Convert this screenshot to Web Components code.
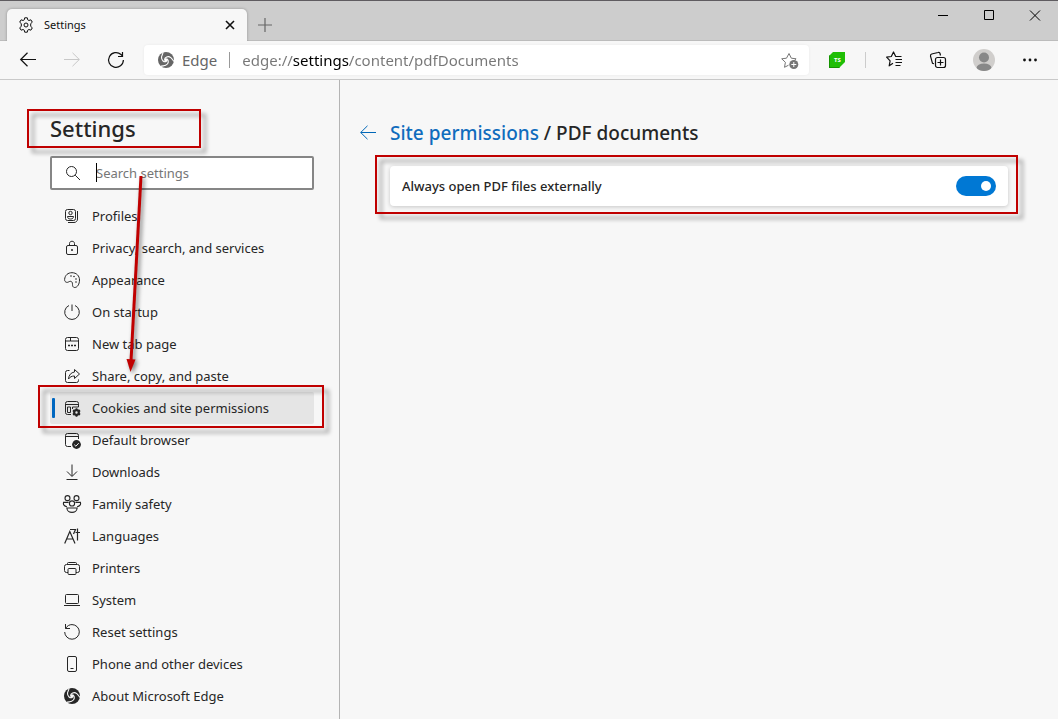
<!DOCTYPE html>
<html lang="en">
<head>
<meta charset="utf-8">
<title>Settings</title>
<style>
  html { height: 100%; }
  body {
    margin: 0;
    min-height: 100%;
    display: flex;
    background: #f7f7f7;
    color: #262626;
    font: 13px/20px "Noto Sans", "Open Sans", sans-serif;
  }
</style>
</head>
<body>
<edge-window></edge-window>

<script>
const ICONS = {
  gear: '<circle cx="8" cy="8" r="2"/><path d="M6.7 .8h2.6l.4 2 1.2.7 2-.7 1.4 2.4-1.6 1.4v2.8l1.6 1.4-1.4 2.4-2-.7-1.2.7-.4 2H6.7l-.4-2-1.2-.7-2 .7-1.4-2.4 1.6-1.4V6.6L1.700 5.2l1.400-2.400 2 .7 1.200-.7z" stroke-linejoin="round"/>',
  close: '<path d="M4 4l8 8M12 4l-8 8" stroke-width="1.600"/>',
  plus: '<path d="M8 1v14M1 8h14" stroke-width="1.200"/>',
  minimize: '<path d="M3 7.500h10"/>',
  maximize: '<path d="M3.500 2.500h9v9h-9z"/>',
  exit: '<path d="M3 2.500l10 10M13 2.500l-10 10"/>',
  back: '<path d="M16 7.500H.7M7.500 .8L.7 7.500l6.800 6.700" stroke-width="1.200"/>',
  backThin: '<path d="M16 7.500H.7M7.500 .8L.7 7.500l6.800 6.700"/>',
  forward: '<path d="M0 7.500h15.300M8.500 .8l6.800 6.700-6.800 6.700"/>',
  reload: '<path d="M15.400 8A7.400 7.400 0 1 1 13 2.500l1.500 1.500M14.500 0v4.500H10" stroke-width="1.200"/>',
  edge: '<mask id="m"><rect width="16" height="16" fill="#fff" stroke="none"/><circle cx="8" cy="8" r="1.800" fill="#000" stroke="none"/><g id="arms" stroke="#000" stroke-width="1.100"><path id="arm" d="M6.600 7.800C6.600 5.200 10 3.600 12.800 5.600 14.300 6.700 14.800 8.600 16.500 9.600"/><path d="M6.600 7.800C6.600 5.200 10 3.600 12.800 5.600 14.300 6.700 14.800 8.600 16.500 9.600" transform="rotate(120 8 8)"/><path d="M6.600 7.800C6.600 5.200 10 3.600 12.800 5.600 14.300 6.700 14.800 8.600 16.500 9.600" transform="rotate(240 8 8)"/></g></mask><circle cx="8" cy="8" r="8" fill="currentColor" stroke="none" mask="url(#m)"/>',
  starAdd: '<path d="M7.500 13.200l-4 2.100.9-5-3.700-3.500 4.800-.6L8 1.500l2.300 4.700 4.800.6-1.800 1.700" stroke-linejoin="round"/><circle cx="12.800" cy="12.500" r="4.500" fill="currentColor" stroke="none"/><path d="M12.800 10v5M10.300 12.500h5" stroke="#fff"/>',
  favorites: '<path d="M7 12.300l-3.800 2.500.9-5L.6 6.200l4.700-.7L7.500 1l2.200 4.500h5.800M9.500 8.500H16M9.500 11.500H16M9.500 14.500h5" stroke-width="1.200" stroke-linejoin="round" transform="translate(0 -1)"/>',
  collections: '<rect x="5.500" y="5.500" width="10" height="10" rx="2" stroke-width="1.200"/><path d="M10.500 7.500v6M7.500 10.500h6M4 11.800l-1.500-.5-2-7.200C.3 3 .8 2.300 1.700 2L8 .5c1-.3 1.800.2 2 1l.5 2" stroke-width="1.200"/>',
  more: '<g fill="currentColor" stroke="none"><circle cx="2.500" cy="8" r="1.400"/><circle cx="8" cy="8" r="1.400"/><circle cx="13.500" cy="8" r="1.400"/></g>',
  search: '<circle cx="6.500" cy="6.500" r="5"/><path d="M10.200 10.200L15 15"/>',
  profiles: '<rect x="1.500" y="1.500" width="10" height="11" rx="2"/><circle cx="6.500" cy="5" r="1.700"/><path d="M3.500 8.500h6c0 1.500-1 2.500-3 2.500s-3-1-3-2.500zM13.500 3v8c0 2-1.500 3.500-3.500 3.500H4"/>',
  lock: '<rect x="2.500" y="5.500" width="11" height="9" rx="1.500"/><path d="M5.500 5.500V3.500c0-3 5-3 5 0v2"/><circle cx="8" cy="10" r="1" fill="currentColor" stroke="none"/>',
  palette: '<path d="M.6 7.500C1 3 4 .7 8 .7c4.500 0 7.500 3.200 7.500 7.300 0 4-2 7.500-4.800 7.500-1.700 0-2.200-1.500-2.200-3 0-2-.7-3.200-2-3.200-1.700 0-2.500 1.500-4 1C1.200 9.900 .5 9 .6 7.500z"/><g fill="currentColor" stroke="none"><circle cx="7" cy="4" r=".8"/><circle cx="10" cy="4.500" r=".8"/><circle cx="12" cy="7" r=".8"/><circle cx="12" cy="10" r=".8"/></g>',
  power: '<path d="M5 1.500A7.300 7.300 0 1 0 11 1.500M8 .5V7"/>',
  newTab: '<rect x="1.500" y="1.500" width="13" height="13" rx="2"/><path d="M1.500 5h5V1.500M6.500 5h8"/><path d="M4 9.500h2M7 9.500h2M10 9.500h2" stroke-width="1.500"/>',
  share: '<path d="M5.500 2.500H3.500a2 2 0 0 0-2 2v8a2 2 0 0 0 2 2h9a2 2 0 0 0 2-2v-1"/><path d="M10.500 1.500l5 4.500-5 4.500V8C7.500 8 6 9 4.500 11c.3-4 2.500-6.500 6-7z" stroke-linejoin="round"/>',
  cookies: '<path d="M7 14.500H3.500a2 2 0 0 1-2-2v-9a2 2 0 0 1 2-2h9a2 2 0 0 1 2 2V7M1.500 4.500h13M8.500 7h6M3.500 7h3v5.500h-3zM8.500 7v2"/><circle cx="12.500" cy="12.500" r="2.300" stroke-width="2.200"/><path d="M12.500 8.300v2M12.500 14.800v2M8.900 10.400l1.700 1M14.400 13.600l1.700 1M16.100 10.400l-1.700 1M10.600 13.600l-1.700 1" stroke-width="1.800"/>',
  browser: '<path d="M7 14.500H3.500a2 2 0 0 1-2-2v-9a2 2 0 0 1 2-2h9a2 2 0 0 1 2 2V7M1.500 4.500h13"/><circle cx="12.500" cy="12.500" r="4.400" fill="currentColor" stroke="none"/><path d="M10.300 12.700l1.600 1.500 2.800-3" stroke="#f7f7f7"/>',
  download: '<path d="M8 .5v11.500M3 7.500l5 5 5-5M2.500 15.500h11"/>',
  family: '<g transform="translate(-1 -1) scale(1.125)"><circle cx="4" cy="2.800" r="2.200"/><circle cx="12" cy="2.800" r="2.200"/><circle cx="8" cy="7.500" r="2.300"/><path d="M5 6.500H.5c-.5 2 .5 3.500 3 4M11 6.500h4.500c.5 2-.5 3.500-3 4M3.500 11.500h9c0 5.300-9 5.300-9 0z"/></g>',
  languages: '<path d="M.7 15.500L5.800 3.500l5.200 12M2.500 11h6.800M6 1.500h5.500L9.500 6M13.500 .5v12M11.500 4.500h4.500" stroke-width="1.200"/>',
  printer: '<path d="M4 12.500H2.500a2 2 0 0 1-2-2V6.500a2 2 0 0 1 2-2h11a2 2 0 0 1 2 2v4a2 2 0 0 1-2 2H12M3.500 4.500v-1a1 1 0 0 1 1-1h7a1 1 0 0 1 1 1v1"/><rect x="4" y="8.500" width="8" height="6" rx="1"/>',
  laptop: '<rect x="1.500" y="2.500" width="13" height="9" rx="1"/><path d="M0 13.500h16"/>',
  reset: '<path d="M1.500 0v4.500H6M1.500 4.500C3.500 1.500 5.500 .6 8 .6A7.300 7.300 0 1 1 .7 8"/>',
  phone: '<rect x="3.500" y=".5" width="9" height="15" rx="1.500"/><path d="M6.500 12.500h3"/>'
};

function define(name, html, setup) {
  const template = document.createElement('template');
  template.innerHTML = html;
  customElements.define(name, class extends HTMLElement {
    constructor() {
      super();
      this.attachShadow({ mode: 'open' }).append(template.content.cloneNode(true));
    }
    connectedCallback() { if (setup) setup(this, this.shadowRoot); }
  });
}

define('ui-icon', `
  <style>
    :host { display: block; flex: none; width: 16px; height: 16px; }
    svg { display: block; width: 100%; height: 100%; overflow: visible; }
  </style>
  <svg viewBox="0 0 16 16" fill="none" stroke="currentColor" aria-hidden="true"></svg>
`, (host, root) => { root.querySelector('svg').innerHTML = ICONS[host.getAttribute('name')] || ''; });

define('icon-button', `
  <style>
    :host { display: flex; flex: none; width: 40px; height: 30px; }
    button {
      flex: 1; display: flex; align-items: center; justify-content: center;
      border: 0; padding: 0; background: none; color: inherit; font: inherit;
    }
  </style>
  <button type="button"><slot></slot></button>
`, (host, root) => {
  root.querySelector('button').setAttribute('aria-label', host.getAttribute('label'));
  root.querySelector('button').disabled = host.hasAttribute('disabled');
});

define('callout-frame', `
  <style>
    :host { display: block; position: relative; }
    .frame {
      position: absolute; z-index: 2; pointer-events: none;
      inset: var(--frame-inset, -10px);
      border: 2px solid #c00000;
      filter: drop-shadow(5px 5px 2px rgba(0, 0, 0, .4));
    }
  </style>
  <slot></slot><div class="frame"></div>
`);

define('callout-arrow', `
  <style>
    :host { display: block; position: absolute; z-index: 3; pointer-events: none; }
    svg { display: block; overflow: visible; filter: drop-shadow(2px 2px 2px rgba(0, 0, 0, .5)); }
  </style>
  <svg width="20" height="198" viewBox="0 0 20 198" aria-hidden="true">
    <path d="M16 1L6 186" stroke="#c00000" stroke-width="3" fill="none"/>
    <path d="M1.500 184l9 .5L5.500 197z" fill="#c00000"/>
  </svg>
`);

define('tab-strip', `
  <style>
    :host {
      display: flex; box-sizing: border-box; height: 41px; padding-left: 7px;
      background: #cdcdcd; border-top: 1px solid #5f5c60; border-bottom: 1px solid #bcbcbc;
    }
    .tab {
      display: flex; align-items: center; gap: 10px; box-sizing: border-box;
      width: 240px; height: 32px; margin-top: 8px; padding: 0 5px 0 11px;
      background: #f7f7f7; border-radius: 5px 5px 0 0; box-shadow: 0 0 3px rgba(0, 0, 0, .3);
      clip-path: inset(-4px -4px 0 -4px);
      color: #101010; font-size: 11px;
    }
    .tab span { flex: 1; }
    .tab icon-button { width: 24px; height: 24px; }
    .new { width: 36px; margin-top: 9px; color: #666; }
    .controls { display: flex; margin-left: auto; color: #000; }
    .controls icon-button { width: 46px; }
  </style>
  <div class="tab" role="tab" aria-selected="true">
    <ui-icon name="gear"></ui-icon><span>Settings</span>
    <icon-button label="Close tab"><ui-icon name="close"></ui-icon></icon-button>
  </div>
  <icon-button class="new" label="New tab"><ui-icon name="plus"></ui-icon></icon-button>
  <div class="controls">
    <icon-button label="Minimize"><ui-icon name="minimize"></ui-icon></icon-button>
    <icon-button label="Maximize"><ui-icon name="maximize"></ui-icon></icon-button>
    <icon-button label="Close"><ui-icon name="exit"></ui-icon></icon-button>
  </div>
`);

define('address-bar', `
  <style>
    :host {
      display: flex; align-items: center; flex: 1; min-width: 0; height: 30px;
      background: #fff; border-radius: 4px; box-shadow: 0 0 3px rgba(0, 0, 0, .06);
      color: #666; font-size: 15px;
    }
    ui-icon { margin: 0 8px 0 14px; }
    label { padding-right: 12px; border-right: 1px solid #999; line-height: 16px; }
    input {
      flex: 1; min-width: 0; height: 24px; margin-left: 12px; padding: 0; border: 0; outline: 0;
      color: #767676; font: inherit;
      background: linear-gradient(90deg, #767676 51px, #000 51px 107px, #767676 107px);
      -webkit-background-clip: text; background-clip: text;
      -webkit-text-fill-color: transparent;
    }
    icon-button { color: #767676; }
    icon-button ui-icon { margin: 0; }
  </style>
  <ui-icon name="edge"></ui-icon><label for="url">Edge</label>
  <input id="url" type="text" value="edge://settings/content/pdfDocuments">
  <icon-button label="Add to favorites"><ui-icon name="starAdd"></ui-icon></icon-button>
`);

define('tool-bar', `
  <style>
    :host {
      display: flex; align-items: center; box-sizing: border-box; gap: 4px;
      height: 39px; padding: 0 8px; background: #f7f7f7; border-bottom: 1px solid #c9c9c9; color: #111;
    }
    icon-button[disabled] { color: #c8c8c8; }
    address-bar { margin: 0 4px; }
    .divider { width: 1px; height: 16px; margin: 0 4px; background: #ccc; }
    .badge {
      display: flex; align-items: center; justify-content: center; width: 16px; height: 16px;
      background: #1fbe05; clip-path: polygon(4px 0, 100% 0, 100% 10px, 10px 100%, 0 100%, 0 4px);
      color: #fff; font-size: 6px; font-weight: 700; line-height: 8px;
      box-sizing: border-box; border-left: 1px solid #149400; border-bottom: 1px solid #149400;
    }
    .avatar { display: block; width: 22px; height: 22px; }
    .profile { width: 44px; }
  </style>
  <icon-button label="Back"><ui-icon name="back"></ui-icon></icon-button>
  <icon-button label="Forward" disabled><ui-icon name="forward"></ui-icon></icon-button>
  <icon-button label="Refresh"><ui-icon name="reload"></ui-icon></icon-button>
  <address-bar></address-bar>
  <icon-button label="Extension"><span class="badge">TS</span></icon-button>
  <span class="divider"></span>
  <icon-button label="Favorites"><ui-icon name="favorites"></ui-icon></icon-button>
  <icon-button label="Collections"><ui-icon name="collections"></ui-icon></icon-button>
  <icon-button class="profile" label="Profile">
    <svg class="avatar" viewBox="0 0 22 22" aria-hidden="true">
      <clipPath id="c"><circle cx="11" cy="11" r="11"/></clipPath>
      <g clip-path="url(#c)"><path fill="#d0cecc" d="M0 0h22v22H0z"/><circle cx="11" cy="8.500" r="5" fill="#888"/><ellipse cx="11" cy="19" rx="7.500" ry="4.500" fill="#888"/></g>
    </svg>
  </icon-button>
  <icon-button label="Settings and more"><ui-icon name="more"></ui-icon></icon-button>
`);

define('search-box', `
  <style>
    :host {
      display: flex; align-items: center; gap: 15px; box-sizing: border-box; height: 34px;
      padding: 0 8px 0 13px; background: #fff; border: 2px solid #868686; border-radius: 2px;
    }
    .field { position: relative; flex: 1; display: flex; }
    input { flex: 1; min-width: 0; height: 24px; padding: 0; border: 0; outline: 0; background: none; font: inherit; color: inherit; }
    input::placeholder { color: #767676; opacity: 1; }
    .caret { position: absolute; left: 0; top: 2px; width: 1px; height: 19px; background: #000; }
  </style>
  <ui-icon name="search"></ui-icon>
  <div class="field"><input type="search" aria-label="Search settings" placeholder="Search settings"><span class="caret"></span></div>
`);

define('nav-item', `
  <style>
    :host { display: block; }
    a {
      display: flex; align-items: center; gap: 12px; height: 32px; padding-left: 14px;
      border-radius: 2px; color: inherit; text-decoration: none;
    }
    :host([selected]) a { position: relative; background: #e5e5e5; }
    :host([selected]) a::before {
      content: ""; position: absolute; left: 2px; top: 6px; width: 3px; height: 20px; background: #0067c0; border-radius: 1px;
    }
  </style>
  <a href="#"><ui-icon></ui-icon><slot></slot></a>
`, (host, root) => {
  root.querySelector('ui-icon').replaceWith(Object.assign(document.createElement('template'), {
    innerHTML: '<ui-icon name="' + host.getAttribute('icon') + '"></ui-icon>'
  }).content);
  if (host.hasAttribute('selected')) root.querySelector('a').setAttribute('aria-current', 'page');
});

define('settings-nav', `
  <style>
    :host {
      display: block; position: relative; flex: none; box-sizing: border-box; width: 340px;
      padding: 32px 25px 7px 50px; border-right: 1px solid #b4b4b4;
    }
    h1 { margin: 0; font-size: 22px; line-height: 32px; font-weight: 500; }
    .title { --frame-inset: -3px 113px -4px -23px; }
    .current { --frame-inset: -7px -10px -4px -12px; }
    search-box { margin: 12px 0 10px; }
    callout-arrow { left: 125px; top: 95px; }
  </style>
  <callout-frame class="title"><h1>Settings</h1></callout-frame>
  <search-box></search-box>
  <nav>
    <nav-item icon="profiles">Profiles</nav-item>
    <nav-item icon="lock">Privacy, search, and services</nav-item>
    <nav-item icon="palette">Appearance</nav-item>
    <nav-item icon="power">On startup</nav-item>
    <nav-item icon="newTab">New tab page</nav-item>
    <nav-item icon="share">Share, copy, and paste</nav-item>
    <callout-frame class="current"><nav-item icon="cookies" selected>Cookies and site permissions</nav-item></callout-frame>
    <nav-item icon="browser">Default browser</nav-item>
    <nav-item icon="download">Downloads</nav-item>
    <nav-item icon="family">Family safety</nav-item>
    <nav-item icon="languages">Languages</nav-item>
    <nav-item icon="printer">Printers</nav-item>
    <nav-item icon="laptop">System</nav-item>
    <nav-item icon="reset">Reset settings</nav-item>
    <nav-item icon="phone">Phone and other devices</nav-item>
    <nav-item icon="edge">About Microsoft Edge</nav-item>
  </nav>
  <callout-arrow></callout-arrow>
`);

define('setting-toggle', `
  <style>
    :host { display: block; background: #fff; border-radius: 4px; box-shadow: 0 1px 4px rgba(0, 0, 0, .2); }
    label { display: flex; align-items: center; justify-content: space-between; height: 40px; padding: 0 12px; font-weight: 500; }
    input {
      appearance: none; display: flex; align-items: center; justify-content: flex-end; box-sizing: border-box;
      width: 40px; height: 20px; margin: 0; padding: 0 5px; border-radius: 10px; background: #0078d4;
    }
    input::before { content: ""; width: 10px; height: 10px; border-radius: 5px; background: #fff; }
    input:not(:checked) { justify-content: flex-start; background: #767676; }
  </style>
  <label><slot></slot><input type="checkbox" role="switch" checked></label>
`);

define('settings-page', `
  <style>
    :host { display: block; flex: 1; min-width: 0; padding: 37px 50px 0 20px; }
    header { display: flex; align-items: center; gap: 14px; height: 32px; }
    header icon-button { width: 16px; color: #0067b8; }
    h2 { margin: 0; font-size: 19px; line-height: 32px; font-weight: 500; }
    h2 a { color: #0f6cbd; text-decoration: none; }
    callout-frame { margin: 17px 0 0 30px; --frame-inset: -11px -10px -8px -15px; }
  </style>
  <header>
    <icon-button label="Back to site permissions"><ui-icon name="backThin"></ui-icon></icon-button>
    <h2><a href="#">Site permissions</a> / PDF documents</h2>
  </header>
  <callout-frame><setting-toggle>Always open PDF files externally</setting-toggle></callout-frame>
`);

define('edge-window', `
  <style>
    :host { flex: 1; min-width: 0; display: flex; flex-direction: column; }
    main { flex: 1; display: flex; }
  </style>
  <tab-strip></tab-strip>
  <tool-bar></tool-bar>
  <main><settings-nav></settings-nav><settings-page></settings-page></main>
`);
</script>
</body>
</html>
